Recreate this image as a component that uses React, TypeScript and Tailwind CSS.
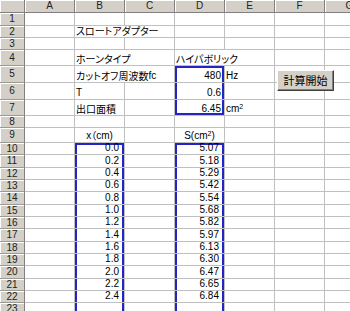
import React from 'react';

const jp = "font-['Noto_Sans_CJK_JP','Liberation_Sans',sans-serif] [font-feature-settings:'palt'] text-[10px]";
const num = "font-['Liberation_Sans',Arial,sans-serif] text-[10px]";

const boxTop = 'shadow-[inset_2px_0_0_#2424c4,inset_-2px_0_0_#2424c4,inset_0_2px_0_#2424c4]';
const boxMid = 'shadow-[inset_2px_0_0_#2424c4,inset_-2px_0_0_#2424c4]';
const boxBottom = 'shadow-[inset_2px_0_0_#2424c4,inset_-2px_0_0_#2424c4,inset_0_-2px_0_#2424c4]';

type CellProps = {
  w?: string;
  className?: string;
  children?: React.ReactNode;
};

const Cell: React.FC<CellProps> = ({ w = 'w-[50px]', className = '', children }) => (
  <div
    className={`${w} shrink-0 h-full border-r border-b border-[#c0c0c0] flex items-end whitespace-nowrap overflow-visible leading-none pb-[1px] text-black ${className}`}
  >
    {children}
  </div>
);

const RowHead: React.FC<{ n: number }> = ({ n }) => (
  <div className={`w-[25px] shrink-0 h-full bg-[#d4d0c8] border-r border-b border-r-[#808080] border-b-[#9c9a94] shadow-[inset_1px_1px_0_#ffffff] flex items-center justify-center leading-none text-[#222] ${num}`}>
    {n}
  </div>
);

const xs = ['0.0', '0.2', '0.4', '0.6', '0.8', '1.0', '1.2', '1.4', '1.6', '1.8', '2.0', '2.2', '2.4'];
const ss = ['5.07', '5.18', '5.29', '5.42', '5.54', '5.68', '5.82', '5.97', '6.13', '6.30', '6.47', '6.65', '6.84'];
const tableHeights = ['h-[12px]', 'h-[13px]', 'h-[12px]', 'h-[12px]', 'h-[13px]', 'h-[12px]', 'h-[12px]', 'h-[13px]', 'h-[12px]', 'h-[12px]', 'h-[13px]', 'h-[12px]', 'h-[12px]'];

const Sup: React.FC<{ children: React.ReactNode }> = ({ children }) => (
  <span className="text-[7px] relative -top-[4px]">{children}</span>
);

const App: React.FC = () => {
  return (
    <div className="w-[350px] h-[311px] overflow-hidden bg-white relative select-none">
      <div className="w-[400px]">
        {/* column headers */}
        <div className="flex h-[13px]">
          <div className="w-[25px] shrink-0 h-full bg-[#d4d0c8] border-r border-b border-[#808080] shadow-[inset_1px_1px_0_#ffffff]" />
          {['A', 'B', 'C', 'D', 'E', 'F', 'G'].map((c) => (
            <div
              key={c}
              className={`w-[50px] shrink-0 h-full bg-[#d4d0c8] border-r border-b border-[#808080] shadow-[inset_1px_1px_0_#ffffff] flex items-center justify-center leading-none text-[#222] ${num}`}
            >
              {c}
            </div>
          ))}
        </div>

        {/* row 1 */}
        <div className="flex h-[13px]">
          <RowHead n={1} />
          <Cell /><Cell /><Cell /><Cell /><Cell /><Cell /><Cell />
        </div>

        {/* row 2 */}
        <div className="flex h-[12px]">
          <RowHead n={2} />
          <Cell />
          <Cell w="w-[100px]" className={`pl-[1px] ${jp}`}>スロートアダプター</Cell>
          <Cell /><Cell /><Cell /><Cell />
        </div>

        {/* row 3 */}
        <div className="flex h-[12px]">
          <RowHead n={3} />
          <Cell /><Cell /><Cell /><Cell /><Cell /><Cell /><Cell />
        </div>

        {/* row 4 */}
        <div className="flex h-[16px]">
          <RowHead n={4} />
          <Cell />
          <Cell w="w-[100px]" className={`pl-[1px] ${jp}`}>ホーンタイプ</Cell>
          <Cell w="w-[100px]" className={`pl-[1px] ${jp}`}>ハイパボリック</Cell>
          <Cell /><Cell />
        </div>

        {/* row 5 */}
        <div className="flex h-[17px]">
          <RowHead n={5} />
          <Cell />
          <Cell w="w-[100px]" className={`pl-[1px] ${jp}`}>
            カットオフ周波数<span className={num}>fc</span>
          </Cell>
          <Cell className={`justify-end pr-[3px] ${boxTop} ${num}`}>480</Cell>
          <Cell className={`pl-[1px] ${num}`}>Hz</Cell>
          <Cell /><Cell />
        </div>

        {/* row 6 */}
        <div className="flex h-[17px]">
          <RowHead n={6} />
          <Cell />
          <Cell className={`pl-[1px] ${num}`}>T</Cell>
          <Cell />
          <Cell className={`justify-end pr-[3px] ${boxMid} ${num}`}>0.6</Cell>
          <Cell /><Cell /><Cell />
        </div>

        {/* row 7 */}
        <div className="flex h-[16px]">
          <RowHead n={7} />
          <Cell />
          <Cell className={`pl-[1px] ${jp}`}>出口面積</Cell>
          <Cell />
          <Cell className={`justify-end pr-[3px] ${boxBottom} ${num}`}>6.45</Cell>
          <Cell className={`pl-[1px] ${num}`}>
            cm<Sup>2</Sup>
          </Cell>
          <Cell /><Cell />
        </div>

        {/* row 8 */}
        <div className="flex h-[12px]">
          <RowHead n={8} />
          <Cell /><Cell /><Cell /><Cell /><Cell /><Cell /><Cell />
        </div>

        {/* row 9 */}
        <div className="flex h-[15px]">
          <RowHead n={9} />
          <Cell />
          <Cell className={`justify-center ${num}`}>
            x<span className={jp}>（</span>cm)
          </Cell>
          <Cell />
          <Cell className={`justify-center ${num}`}>
            S(cm<Sup>2</Sup>)
          </Cell>
          <Cell /><Cell /><Cell />
        </div>

        {/* table rows */}
        {xs.map((x, i) => {
          const box = i === 0 ? boxTop : boxMid;
          return (
            <div key={x} className={`flex ${tableHeights[i]}`}>
              <RowHead n={10 + i} />
              <Cell />
              <Cell className={`justify-end pr-[5px] ${box} ${num}`}>{x}</Cell>
              <Cell />
              <Cell className={`justify-end pr-[5px] ${box} ${num}`}>{ss[i]}</Cell>
              <Cell /><Cell /><Cell />
            </div>
          );
        })}

        {/* row 23 */}
        <div className="flex h-[13px]">
          <RowHead n={23} />
          <Cell />
          <Cell className={boxMid} />
          <Cell />
          <Cell className={boxMid} />
          <Cell /><Cell /><Cell />
        </div>
      </div>

      {/* calc button floating over the sheet */}
      <button
        className={`absolute left-[277px] top-[70px] w-[57px] h-[21px] bg-[#d4d0c8] border border-t-white border-l-white border-r-[#404040] border-b-[#404040] shadow-[inset_-1px_-1px_0_#808080] flex items-center justify-center leading-none text-black text-[11px] ${jp} text-[11px]`}
      >
        計算開始
      </button>
    </div>
  );
};

export default App;
